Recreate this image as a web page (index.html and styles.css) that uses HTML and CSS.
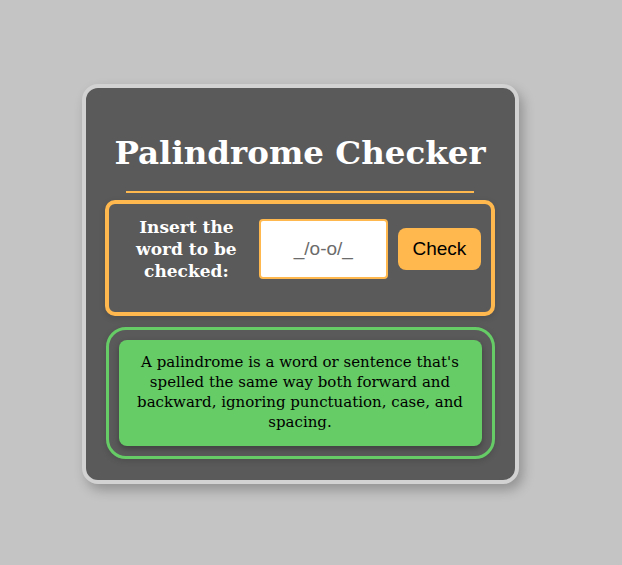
FILE: index.html
```html
<!DOCTYPE html>
<html lang="en">
<head>
<meta charset="utf-8">
<title>Palindrome Checker</title>
<link rel="stylesheet" href="styles.css">
</head>
<body>
<main class="card">
  <h1 class="title">Palindrome Checker</h1>
  <hr class="divider">
  <section class="checker">
    <label class="label" for="word">Insert the word to be checked:</label>
    <input class="input" id="word" type="text" placeholder="_/o-o/_">
    <button class="btn">Check</button>
  </section>
  <section class="info">
    <p class="info-text">A palindrome is a word or sentence that's spelled the same way both forward and backward, ignoring punctuation, case, and spacing.</p>
  </section>
</main>
</body>
</html>
```

FILE: styles.css
```css
html, body {
  margin: 0;
  padding: 0;
}
body {
  background: #c4c4c4;
  min-height: 565px;
  padding: 84px 0 0 82px;
  box-sizing: border-box;
  font-family: "DejaVu Serif", Georgia, serif;
}
.card {
  width: 437px;
  height: 400px;
  box-sizing: border-box;
  background: #5a5a5a;
  border: 4px solid #d2d2d2;
  border-radius: 16px;
  box-shadow: 4px 6px 12px rgba(0,0,0,0.25);
  padding: 42px 20px 0 19px;
  display: flex;
  flex-direction: column;
  align-items: center;
}
.title {
  margin: 0;
  color: #ffffff;
  font-size: 32.5px;
  font-weight: bold;
  line-height: 46px;
  text-align: center;
  white-space: nowrap;
}
.divider {
  width: 348px;
  border: none;
  height: 2px;
  background: #ffb84d;
  margin: 15px 0 7px;
}
.checker {
  width: 390px;
  height: 116px;
  box-sizing: border-box;
  border: 4px solid #ffb84d;
  border-radius: 10px;
  display: flex;
  align-items: flex-start;
  padding: 15px 10px 0 14px;
  box-shadow: 0 2px 6px rgba(0,0,0,0.15);
}
.label {
  width: 128px;
  margin-top: -3px;
  color: #fff;
  font-weight: bold;
  font-size: 17px;
  line-height: 22px;
  text-align: center;
  margin-right: 9px;
}
.input {
  width: 129px;
  height: 60px;
  box-sizing: border-box;
  border: 2px solid #ffb84d;
  border-radius: 4px;
  background: #fff;
  font-family: "Liberation Sans", Arial, sans-serif;
  font-size: 19px;
  text-align: center;
  padding: 0 6px;
}
.input::placeholder {
  color: #6b6b6b;
}
.btn {
  margin-left: 10px;
  margin-top: 9px;
  width: 84px;
  height: 42px;
  border: none;
  border-radius: 8px;
  background: #ffb84d;
  color: #000;
  font-family: "Liberation Sans", Arial, sans-serif;
  font-size: 19px;
  padding: 0;
}
.info {
  margin-top: 11px;
  width: 389px;
  height: 132px;
  box-sizing: border-box;
  border: 3px solid #66cc66;
  border-radius: 20px;
  padding: 10px;
  box-shadow: 0 2px 6px rgba(0,0,0,0.15);
}
.info-text {
  margin: 0;
  height: 106px;
  box-sizing: border-box;
  background: #66cc66;
  border-radius: 8px;
  box-shadow: 0 3px 6px rgba(0,0,0,0.3);
  color: #000;
  font-size: 15px;
  line-height: 20px;
  text-align: center;
  padding: 12px 14px 0;
}
```
